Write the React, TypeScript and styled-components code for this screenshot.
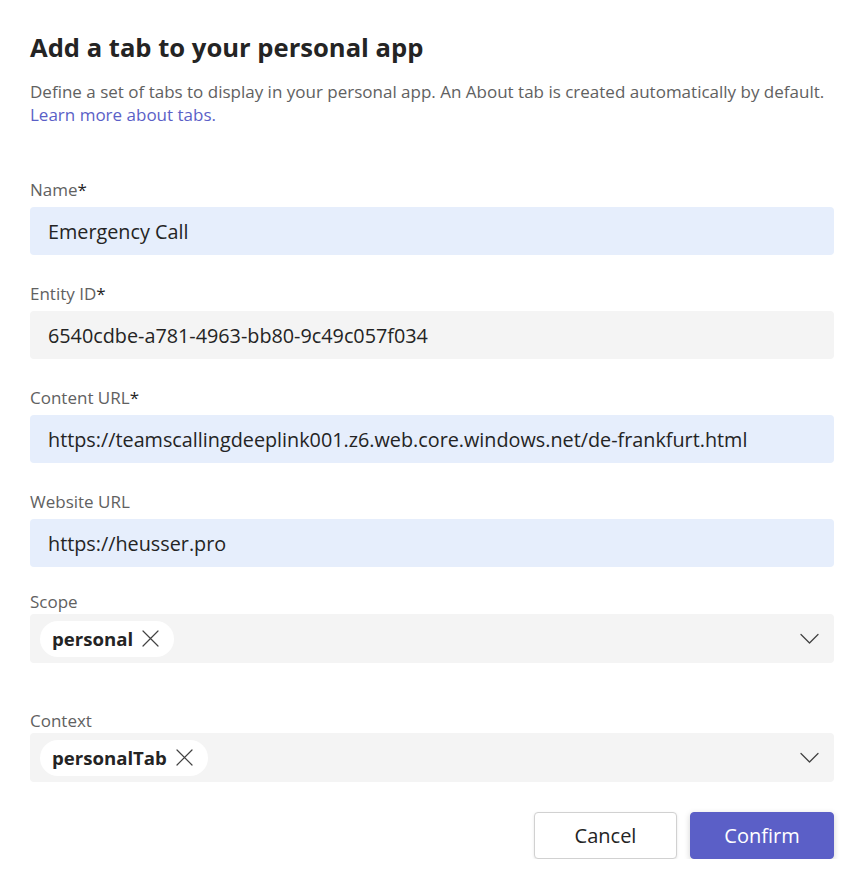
import React from "react";
import styled, { createGlobalStyle } from "styled-components";

const Global = createGlobalStyle`
  html, body { margin: 0; padding: 0; background: #ffffff; }
  body { font-family: "Open Sans", "Noto Sans", Arial, sans-serif; color: #242424; }
  * { box-sizing: border-box; }
`;

const Page = styled.div`
  width: 863px;
  padding: 28px 29px 0 30px;
  display: flex;
  flex-direction: column;
`;

const Title = styled.h1`
  margin: 0;
  font-size: 25.6px;
  line-height: 40px;
  font-weight: 700;
  color: #242424;
`;

const Description = styled.p`
  margin: 12px 0 0;
  font-size: 17px;
  line-height: 23px;
  color: #616161;
`;

const Link = styled.a`
  color: #5b5fc7;
  text-decoration: none;
`;

const Form = styled.div`
  display: flex;
  flex-direction: column;
  margin-top: 52px;
`;

const Field = styled.div<{ $gap?: number }>`
  display: flex;
  flex-direction: column;
  margin-bottom: ${(p) => p.$gap ?? 27}px;
`;

const Label = styled.label<{ $tight?: boolean }>`
  font-size: 17px;
  line-height: 24px;
  color: #616161;
  margin-bottom: ${(p) => (p.$tight ? 0 : 5)}px;
`;

const Req = styled.span`
  color: #242424;
`;

const Input = styled.div<{ $tone: "blue" | "gray" }>`
  height: 48px;
  border-radius: 4px;
  background: ${(p) => (p.$tone === "blue" ? "#e6eefc" : "#f4f4f4")};
  display: flex;
  align-items: center;
  padding: 0 18px;
  font-size: 19.8px;
  color: #242424;
  white-space: nowrap;
`;

const Dropdown = styled.div`
  height: 49px;
  border-radius: 4px;
  background: #f4f4f4;
  display: flex;
  align-items: center;
  justify-content: space-between;
  padding: 0 15px 0 10px;
`;

const Chip = styled.span`
  display: inline-flex;
  align-items: center;
  gap: 9px;
  height: 36px;
  padding: 0 15px 0 12px;
  border-radius: 18px;
  background: #ffffff;
  font-size: 18.6px;
  font-weight: 700;
  color: #242424;
`;

const Actions = styled.div`
  display: flex;
  justify-content: flex-end;
  gap: 13px;
  margin-top: 8px;
`;

const Button = styled.button<{ $primary?: boolean }>`
  height: 47px;
  width: ${(p) => (p.$primary ? 144 : 143)}px;
  border-radius: 4px;
  font-family: inherit;
  font-size: 20px;
  border: 1px solid ${(p) => (p.$primary ? "#5b5fc7" : "#d1d1d1")};
  background: ${(p) => (p.$primary ? "#5b5fc7" : "#ffffff")};
  color: ${(p) => (p.$primary ? "#ffffff" : "#242424")};
  box-shadow: ${(p) =>
    p.$primary
      ? "0 2px 6px rgba(0,0,0,0.18)"
      : "0 1px 3px rgba(0,0,0,0.10)"};
`;

const Dismiss = () => (
  <svg width="17" height="17" viewBox="0 0 17 17" fill="none">
    <path d="M1 1L16 16M16 1L1 16" stroke="#424242" strokeWidth="1.2" strokeLinecap="round" />
  </svg>
);

const Chevron = () => (
  <svg width="19" height="11" viewBox="0 0 19 11" fill="none">
    <path d="M1 1.5L9.5 10L18 1.5" stroke="#424242" strokeWidth="1.3" strokeLinecap="round" strokeLinejoin="round" />
  </svg>
);

type TextField = { label: string; required?: boolean; value: string; tone: "blue" | "gray"; gap?: number };

const textFields: TextField[] = [
  { label: "Name", required: true, value: "Emergency Call", tone: "blue" },
  { label: "Entity ID", required: true, value: "6540cdbe-a781-4963-bb80-9c49c057f034", tone: "gray" },
  {
    label: "Content URL",
    required: true,
    value: "https://teamscallingdeeplink001.z6.web.core.windows.net/de-frankfurt.html",
    tone: "blue",
  },
  { label: "Website URL", value: "https://heusser.pro", tone: "blue", gap: 23 },
];

export default function App() {
  return (
    <>
      <Global />
      <Page>
        <Title>Add a tab to your personal app</Title>
        <Description>
          Define a set of tabs to display in your personal app. An About tab is created automatically by default.
          <br />
          <Link href="#">Learn more about tabs.</Link>
        </Description>
        <Form>
          {textFields.map((f) => (
            <Field key={f.label} $gap={f.gap}>
              <Label>
                {f.label}
                {f.required && <Req>*</Req>}
              </Label>
              <Input $tone={f.tone}>{f.value}</Input>
            </Field>
          ))}
          <Field $gap={46}>
            <Label $tight>Scope</Label>
            <Dropdown>
              <Chip>
                personal
                <Dismiss />
              </Chip>
              <Chevron />
            </Dropdown>
          </Field>
          <Field $gap={22}>
            <Label $tight>Context</Label>
            <Dropdown>
              <Chip>
                personalTab
                <Dismiss />
              </Chip>
              <Chevron />
            </Dropdown>
          </Field>
          <Actions>
            <Button>Cancel</Button>
            <Button $primary>Confirm</Button>
          </Actions>
        </Form>
      </Page>
    </>
  );
}
